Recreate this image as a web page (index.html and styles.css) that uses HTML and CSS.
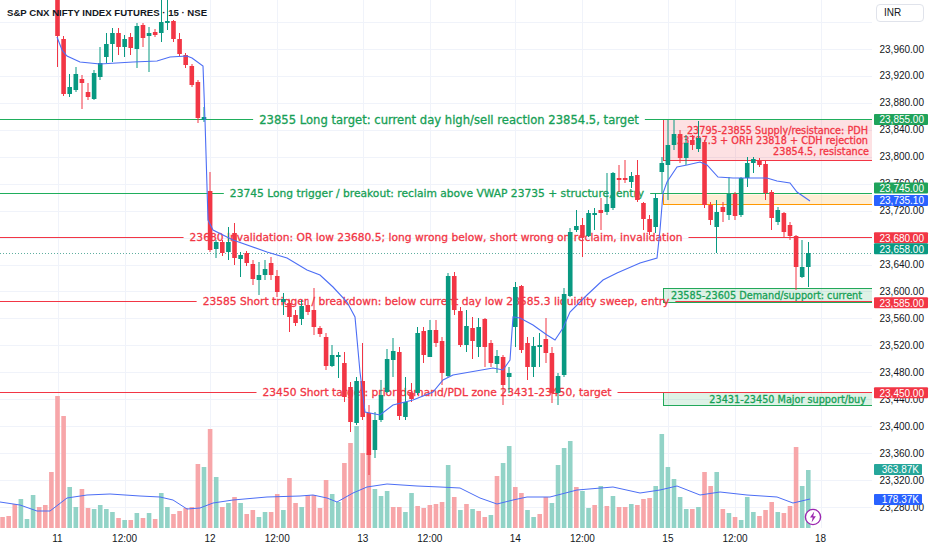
FILE: index.html
```html
<!DOCTYPE html>
<html lang="en">
<head>
<meta charset="utf-8">
<title>S&amp;P CNX NIFTY INDEX FUTURES · 15 · NSE</title>
<link rel="stylesheet" href="styles.css">
</head>
<body>
<div class="app">
  <div class="pane">
    <svg id="plot" class="plot" width="872" height="528" viewBox="0 0 872 528"></svg>
    <div class="legend">S&amp;P CNX NIFTY INDEX FUTURES · 15 · NSE</div>
    <div class="bolt">
      <svg width="18" height="18" viewBox="0 0 18 18">
        <circle cx="9" cy="9" r="7.6" class="bolt-ring"/>
        <path d="M10.2 3.6 L6 9.6 H8.7 L7.6 14.4 L11.9 8.2 H9.2 Z" class="bolt-fill"/>
      </svg>
    </div>
  </div>
  <div class="scale">
    <svg id="scale" class="scale-svg" width="60" height="528" viewBox="0 0 60 528"></svg>
    <div class="currency">INR</div>
  </div>
  <div class="time">
    <svg id="time" class="time-svg" width="932" height="22" viewBox="0 0 932 22"></svg>
  </div>
</div>
<script src="script.js"></script>
</body>
</html>
```
FILE: styles.css
```css
html, body { margin: 0; padding: 0; background: #ffffff; }
body { font-family: "Liberation Sans", Arial, sans-serif; color: #131722; }

.app {
  display: grid;
  grid-template-columns: 872px 60px;
  grid-template-rows: 528px 22px;
  width: 932px;
  height: 550px;
  overflow: hidden;
}
.pane { position: relative; overflow: hidden; }
.plot, .scale-svg, .time-svg { display: block; }
.scale { position: relative; }
.time { grid-column: 1 / span 2; }

.legend {
  position: absolute;
  left: 7px;
  top: 7px;
  font-size: 9.6px;
  line-height: 12px;
  font-weight: 700;
  color: #131722;
  white-space: nowrap;
}

.bolt { position: absolute; left: 804px; top: 508px; width: 18px; height: 18px; }
.bolt svg { display: block; }
.bolt-ring { fill: #ffffff; stroke: #9c27b0; stroke-width: 1.4; }
.bolt-fill { fill: #9c27b0; }

.currency {
  position: absolute;
  left: 4px;
  top: 4px;
  width: 48px;
  height: 18px;
  box-sizing: border-box;
  border: 1px solid #e0e3eb;
  border-radius: 4px;
  background: #ffffff;
  font-size: 10px;
  line-height: 16px;
  padding-left: 7px;
  color: #131722;
}

/* chart drawing */
.grid line { stroke: #f0f3fa; stroke-width: 1; }

.z-supply { fill: rgba(242, 54, 69, 0.15); stroke: #f23645; stroke-width: 1; }
.z-orange { fill: rgba(255, 152, 0, 0.17); }
.z-orange-edge { stroke: #ff9800; stroke-width: 1; }
.z-demand { fill: rgba(34, 171, 90, 0.15); stroke: #22a85a; stroke-width: 1; }

.ztext, .hltext {
  font-family: "DejaVu Sans", Verdana, sans-serif;
  dominant-baseline: central;
  stroke-width: 0.3px;
}
.ztext { font-size: 9.7px; }
.hltext { font-size: 10.7px; }
.hltext.wide { font-size: 11.6px; }
.ztext-r { fill: #f23645; stroke: #f23645; }
.ztext-g { fill: #17a056; stroke: #17a056; }

.hl-g line { stroke: #1fae5c; stroke-width: 1; }
.hl-g text { fill: #17a056; stroke: #17a056; }
.hl-r line { stroke: #f23645; stroke-width: 1; }
.hl-r text { fill: #f23645; stroke: #f23645; }

.v-up { fill: #92d3c7; }
.v-dn { fill: #f7a6a9; }
.vma { fill: none; stroke: #4c6ef5; stroke-width: 1; }

.last { stroke: #5fae9f; stroke-width: 1; stroke-dasharray: 1 2; }

.c-up rect, .c-up line { fill: #089981; stroke: #089981; }
.c-dn rect, .c-dn line { fill: #f23645; stroke: #f23645; }
.c-up rect, .c-dn rect { stroke-width: 0; }
.c-up line, .c-dn line { stroke-width: 1; }

.vwap { fill: none; stroke: #4c6ef5; stroke-width: 1.1; }

/* scale */
.tick {
  font-family: "Liberation Sans", Arial, sans-serif;
  font-size: 10px;
  fill: #131722;
  dominant-baseline: central;
}
.badge-text {
  font-family: "Liberation Sans", Arial, sans-serif;
  font-size: 10px;
  fill: #ffffff;
  dominant-baseline: central;
}
.b-green { fill: #1fa35a; }
.b-blue { fill: #2962ff; }
.b-red { fill: #f23645; }
.b-teal { fill: #089981; }
.b-vteal { fill: #26a69a; }

.tlabel {
  font-family: "Liberation Sans", Arial, sans-serif;
  font-size: 10px;
  fill: #131722;
  dominant-baseline: central;
}
```
FILE: script.js
```js
(function () {
  var NS = 'http://www.w3.org/2000/svg';
  var W = 872, H = 528;
  function Y(p) { return 49 + (23960 - p) * 0.6735; }
  function X(i) { return 57.5 + i * 6.104; }
  function el(parent, tag, attrs, cls, text) {
    var e = document.createElementNS(NS, tag);
    for (var k in attrs) e.setAttribute(k, attrs[k]);
    if (cls) e.setAttribute('class', cls);
    if (text != null) e.textContent = text;
    parent.appendChild(e);
    return e;
  }
  var plot = document.getElementById('plot');

  /* grid */
  var g = el(plot, 'g', {}, 'grid');
  for (var p = 24000; p >= 23280; p -= 40) {
    var gy = Math.round(Y(p)) + 0.5;
    el(g, 'line', { x1: 0, x2: W, y1: gy, y2: gy });
  }
  var ticks = [0, 11, 25, 36, 50, 61, 75, 86, 100, 111, 125];
  ticks.forEach(function (i) {
    var gx = Math.round(X(i)) + 0.5;
    el(g, 'line', { x1: gx, x2: gx, y1: 0, y2: H });
  });

  /* zones */
  var z = el(plot, 'g', {}, 'zones');
  function zone(top, bot, cls) {
    el(z, 'rect', { x: 663.5, y: top + 0.5, width: W - 663, height: bot - top }, cls);
  }
  zone(119, 160, 'z-supply');
  zone(194, 204, 'z-orange');
  el(z, 'line', { x1: 663, x2: W, y1: 204.5, y2: 204.5 }, 'z-orange-edge');
  el(z, 'line', { x1: 663.5, x2: 663.5, y1: 194, y2: 205 }, 'z-orange-edge');
  zone(288, 302, 'z-demand');
  zone(392, 405, 'z-demand');
  el(z, 'text', { x: 868, y: 130, 'text-anchor': 'end' }, 'ztext ztext-r', '23795-23855 Supply/resistance: PDH');
  el(z, 'text', { x: 868, y: 140.5, 'text-anchor': 'end' }, 'ztext ztext-r', '23797.3 + ORH 23818 + CDH rejection');
  el(z, 'text', { x: 869, y: 151, 'text-anchor': 'end' }, 'ztext ztext-r', '23854.5, resistance');
  el(z, 'text', { x: 671, y: 295.5, 'text-anchor': 'start' }, 'ztext ztext-g', '23585-23605 Demand/support: current');
  el(z, 'text', { x: 866, y: 399.5, 'text-anchor': 'end' }, 'ztext ztext-g', '23431-23450 Major support/buy');

  /* horizontal levels */
  var levels = [
    [119.5, 'hl-g', '23855 Long target: current day high/sell reaction 23854.5, target', 449, 'hltext wide'],
    [193.5, 'hl-g', '23745 Long trigger / breakout: reclaim above VWAP 23735 + structure, entry', 437, 'hltext'],
    [237.5, 'hl-r', '23680 Invalidation: OR low 23680.5; long wrong below, short wrong on reclaim, invalidation', 436, 'hltext'],
    [301.5, 'hl-r', '23585 Short trigger / breakdown: below current day low 23585.3 liquidity sweep, entry', 436, 'hltext'],
    [392.5, 'hl-r', '23450 Short target: prior demand/PDL zone 23431-23450, target', 437, 'hltext']
  ];
  levels.forEach(function (lv) {
    var grp = el(plot, 'g', {}, lv[1]);
    var t = el(grp, 'text', { x: lv[3], y: lv[0], 'text-anchor': 'middle' }, lv[4], lv[2]);
    var w = t.getComputedTextLength();
    el(grp, 'line', { x1: 0, x2: lv[3] - w / 2 - 6, y1: lv[0], y2: lv[0] });
    el(grp, 'line', { x1: lv[3] + w / 2 + 6, x2: W, y1: lv[0], y2: lv[0] });
  });

  /* volume */
  var V = ('d517 d516 d504 u499 u519 u495 d507 d505 d472 ' +
    'd396 d416 u487 u507 d489 d508 u509 u505 u509 u512 d518 u520 d520 u513 d518 u513 d519 u493 u507 d514 d511 d508 d507 d464 u467 ' +
    'd429 u477 d507 u503 d497 u503 d514 d510 u517 u512 d512 d494 u510 d478 d503 u507 d495 d495 d508 d480 u494 u502 d463 d443 u426 ' +
    'd453 d453 u489 u496 u491 d507 d507 u512 u493 d506 d508 d505 d504 d502 u465 d497 ' +
    'u510 d504 u509 d511 d517 u515 d476 u463 u446 d487 d493 u510 u517 d514 d497 u503 u465 u448 u441 d487 u491 u508 d505 u486 d506 ' +
    'u496 d507 d507 u504 d505 d499 d498 u486 u434 u467 u479 u497 u509 d509 u507 d472 d486 u472 d509 u513 d517 u520 u497 u512 d516 ' +
    'd510 d502 u512 d513 d506 d447 u486 u470').split(' ');
  var vg = el(plot, 'g', {}, 'volume');
  V.forEach(function (s, k) {
    var i = k - 9;
    var top = parseInt(s.slice(1), 10);
    el(vg, 'rect', { x: (X(i) - 2.3).toFixed(2), y: top, width: 4.6, height: Math.max(1, H - top) }, s[0] === 'u' ? 'v-up' : 'v-dn');
  });

  var vma = [[0,502],[20,505],[37,511],[50,511],[67,498],[87,495],[110,494],[140,496],[160,497],[173,500],[187,509],[200,508],[213,503],[233,500],[267,497],[300,496],[313,495],[327,498],[337,502],[353,493],[367,487],[387,484],[417,486],[440,487],[460,488],[480,498],[497,504],[513,500],[527,497],[550,497],[577,490],[613,487],[640,493],[660,490],[677,486],[700,495],[720,492],[747,495],[777,497],[793,503],[810,499]];
  el(plot, 'polyline', { points: vma.map(function (q) { return q.join(','); }).join(' ') }, 'vma');

  /* last price dotted line */
  el(plot, 'line', { x1: 0, x2: W, y1: 253.5, y2: 253.5 }, 'last');

  /* candles: [up, bodyTop, bodyBottom, wickTop, wickBottom] */
  var C = [
    [0,0,36,-5,67],[0,39,94,36,96],[1,87,94,74,97],[1,74,90,67,92],[0,79,83,75,109],[0,92,97,83,100],[1,73,99,70,100],[1,63,77,47,80],[1,44,57,33,63],[1,33,44,28,62],
    [0,33,47,28,55],[1,39,47,35,57],[0,37,48,33,55],[1,26,49,23,68],[0,25,38,23,47],[1,33,36,27,72],[0,32,35,29,37],[1,22,33,-5,42],[1,21,23,-5,30],[0,21,39,20,42],
    [0,39,54,33,56],[0,55,65,53,68],[0,66,85,64,87],[0,82,118,80,123],[1,117,120,107,122],[0,191,250,172,252],[1,242,249,240,258],[0,242,253,240,256],[1,242,252,227,260],[0,233,258,223,265],
    [1,255,259,252,277],[0,253,263,251,266],[0,264,279,260,285],[1,275,280,262,295],[1,269,275,260,280],[0,263,275,257,280],[0,276,292,270,297],[1,299,302,293,315],[0,303,317,300,332],[0,315,323,310,326],
    [1,306,319,300,325],[0,305,312,300,315],[0,310,327,288,335],[0,328,334,326,337],[0,337,366,333,370],[1,355,366,345,367],[1,355,357,352,378],[0,363,397,352,402],[0,387,422,382,432],[1,381,423,377,425],
    [0,381,417,343,420],[0,413,455,405,475],[1,420,450,412,458],[1,395,420,380,422],[1,359,392,349,393],[1,351,360,338,377],[0,352,416,347,420],[1,402,417,377,420],[0,393,399,383,402],[1,333,393,327,395],
    [0,331,355,327,363],[1,330,357,320,357],[0,330,343,320,347],[0,341,373,337,385],[1,276,376,273,377],[0,276,310,272,315],[0,311,345,307,347],[1,326,345,310,352],[0,328,341,317,359],[1,327,347,318,357],
    [0,319,347,318,367],[0,343,363,340,367],[1,356,364,350,373],[0,357,385,355,405],[1,373,377,367,393],[1,287,327,282,347],[0,286,350,285,353],[0,343,367,337,380],[1,346,367,337,377],[1,345,347,333,367],
    [0,339,353,318,363],[0,353,393,347,403],[1,376,393,373,405],[1,294,375,288,377],[1,232,296,228,297],[1,226,230,210,232],[0,225,237,218,257],[1,213,236,210,237],[1,213,215,208,230],[0,210,213,198,230],
    [1,204,212,173,215],[1,173,208,172,210],[0,178,180,165,192],[0,178,180,160,183],[1,176,182,172,188],[0,175,200,160,202],[0,203,219,202,230],[0,219,232,215,235],[1,198,227,193,233],[1,163,172,157,193],
    [1,145,165,120,200],[1,134,145,120,150],[0,134,158,130,163],[1,143,158,135,165],[0,140,145,135,150],[1,138,149,121,152],[0,142,205,140,208],[0,205,220,202,225],[1,212,227,200,253],[0,207,212,202,222],
    [1,194,215,177,220],[0,194,216,192,220],[1,178,215,177,217],[1,163,178,157,187],[1,159,163,157,173],[0,161,165,158,167],[0,164,193,160,200],[0,192,218,190,230],[1,210,222,207,225],[0,213,232,212,237],
    [0,225,236,222,240],[0,236,267,235,290],[1,267,277,240,278],[1,253,267,242,287]
  ];
  var cg = el(plot, 'g', {}, 'candles');
  C.forEach(function (c, i) {
    var cx = X(i);
    var grp = el(cg, 'g', {}, c[0] ? 'c-up' : 'c-dn');
    var wx = (Math.round(cx * 2) / 2).toFixed(1);
    el(grp, 'line', { x1: wx, x2: wx, y1: c[3], y2: c[4] });
    el(grp, 'rect', { x: (cx - 2.3).toFixed(2), y: c[1], width: 4.6, height: Math.max(1, c[2] - c[1]) });
  });

  var vw = [[57,37],[62,50],[67,56],[80,62],[100,64],[133,62],[157,61],[170,57],[187,56],[192,58],[203,66],[205,120],[208,220],[213,230],[233,240],[267,252],[287,258],[307,270],[320,275],[333,287],[347,302],[355,317],[360,372],[365,412],[380,415],[393,405],[413,400],[433,392],[443,380],[453,375],[493,368],[503,370],[510,360],[513,317],[520,318],[533,325],[547,335],[555,340],[563,328],[570,312],[587,295],[603,280],[617,273],[640,263],[657,258],[660,230],[663,193],[667,182],[677,167],[687,165],[700,162],[707,165],[718,177],[733,178],[767,178],[777,181],[790,183],[797,192],[810,201]];
  el(plot, 'polyline', { points: vw.map(function (q) { return q.join(','); }).join(' ') }, 'vwap');

  /* price scale */
  var sc = document.getElementById('scale');
  for (var pp = 23960; pp >= 23280; pp -= 40) {
    var lbl = pp.toLocaleString('en-US') + '.00';
    el(sc, 'text', { x: 52, y: Y(pp).toFixed(1), 'text-anchor': 'end' }, 'tick', lbl);
  }
  var badges = [
    [119.5, '23,855.00', 'b-green', 54, 52],
    [188, '23,745.00', 'b-green', 54, 52],
    [200.5, '23,735.10', 'b-blue', 54, 52],
    [237.7, '23,680.00', 'b-red', 54, 52],
    [248.7, '23,658.00', 'b-teal', 54, 52],
    [302.8, '23,585.00', 'b-red', 54, 52],
    [392.8, '23,450.00', 'b-red', 54, 52],
    [469.5, '363.87K', 'b-vteal', 48, 47],
    [499.5, '178.37K', 'b-blue', 48, 47]
  ];
  badges.forEach(function (b) {
    el(sc, 'rect', { x: 2, y: b[0] - 5.5, width: b[3], height: 11, rx: 1 }, b[2]);
    el(sc, 'text', { x: b[4], y: b[0] + 0.3, 'text-anchor': 'end' }, 'badge-text', b[1]);
  });

  /* time scale */
  var ts = document.getElementById('time');
  var tl = ['11', '12:00', '12', '12:00', '13', '12:00', '14', '12:00', '15', '12:00', '18'];
  ticks.forEach(function (i, k) {
    el(ts, 'text', { x: X(i).toFixed(1), y: 10, 'text-anchor': 'middle' }, 'tlabel', tl[k]);
  });
})();
```
